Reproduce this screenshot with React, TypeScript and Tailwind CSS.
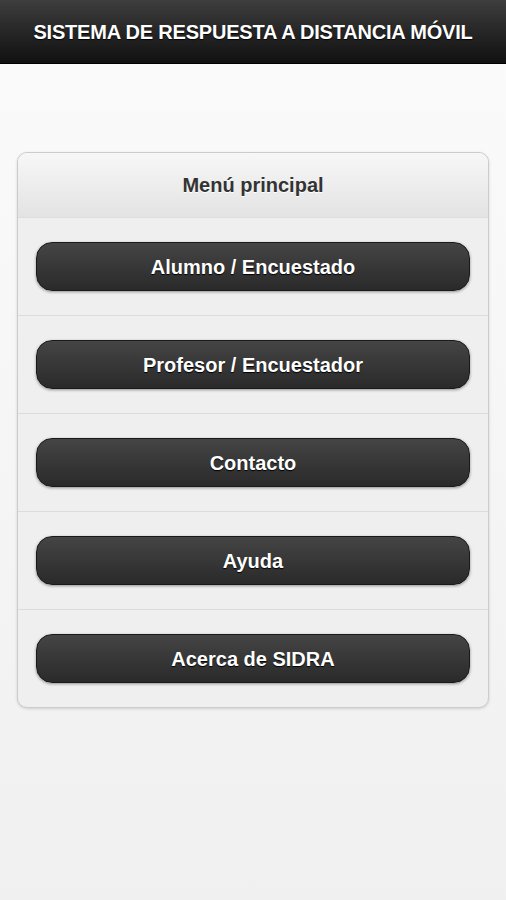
import React from 'react';

const items = ['Alumno / Encuestado', 'Profesor / Encuestador', 'Contacto', 'Ayuda', 'Acerca de SIDRA'];

const App: React.FC = () => {
    return (
        <div className="min-h-[900px] w-full bg-gradient-to-b from-[#fbfbfb] to-[#f0f0f0] font-['Liberation_Sans',Arial,sans-serif]">
            <header className="h-16 flex items-center justify-center bg-gradient-to-b from-[#3e3e3e] to-[#111111] border-b border-[#000]">
                <h1 className="text-[20px] font-bold text-white tracking-[-0.2px] [text-shadow:0_1px_1px_#000]">
                    SISTEMA DE RESPUESTA A DISTANCIA MÓVIL
                </h1>
            </header>

            <div className="px-[17px] pt-[88px]">
                <div className="rounded-[10px] border border-[#cccccc] bg-[#efefef] overflow-hidden shadow-[0_1px_3px_rgba(0,0,0,0.15)]">
                    <div className="h-[65px] flex items-center justify-center bg-gradient-to-b from-[#f7f7f7] to-[#e3e3e3] border-b border-[#dddddd]">
                        <span className="text-[20px] font-bold text-[#333] [text-shadow:0_1px_0_#fff]">Menú principal</span>
                    </div>
                    {items.map((label, i) => (
                        <div
                            key={label}
                            className={`px-[18px] py-[24px] ${i < items.length - 1 ? 'border-b border-[#dcdcdc]' : ''}`}
                        >
                            <button className="w-full h-[49px] rounded-[16px] border border-[#1a1a1a] bg-gradient-to-b from-[#454545] to-[#2a2a2a] text-white text-[20px] font-bold [text-shadow:0_1px_1px_#000] shadow-[0_1px_3px_rgba(0,0,0,0.4)]">
                                {label}
                            </button>
                        </div>
                    ))}
                </div>
            </div>
        </div>
    );
};

export default App;
